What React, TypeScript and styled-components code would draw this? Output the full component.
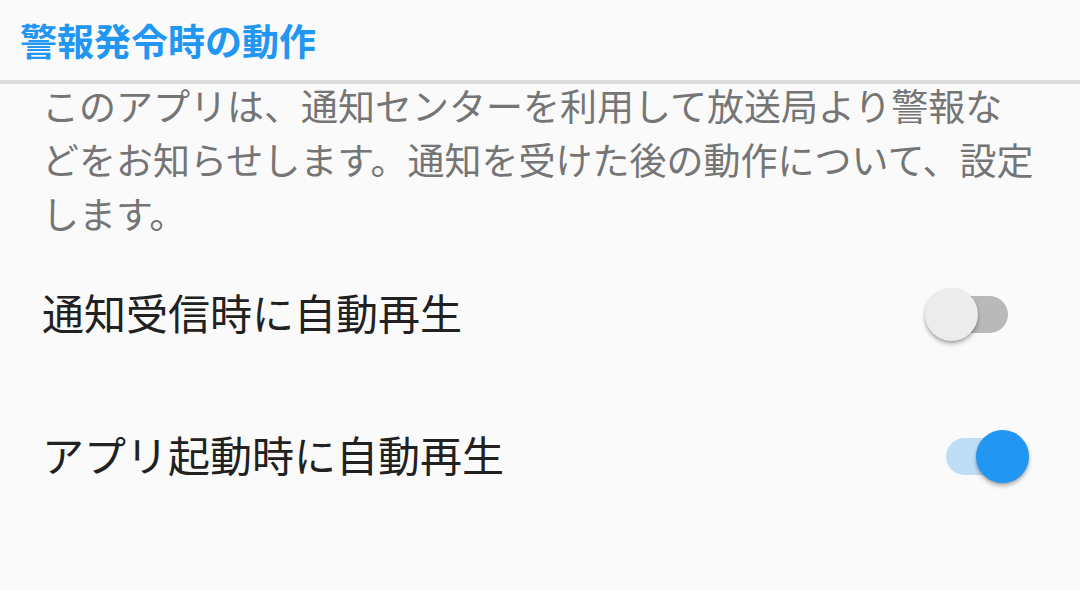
import React, { useState } from "react";
import styled, { createGlobalStyle } from "styled-components";

const GlobalStyle = createGlobalStyle`
  body {
    margin: 0;
    background: #fafafa;
    font-family: "Noto Sans CJK JP", "Noto Sans", sans-serif;
  }
`;

const Screen = styled.div`
  width: 1080px;
  height: 590px;
  background: #fafafa;
  display: flex;
  flex-direction: column;
  overflow: hidden;
`;

const Header = styled.div`
  height: 80px;
  display: flex;
  align-items: center;
  padding-left: 20px;
`;

const Title = styled.h1`
  margin: 0;
  font-size: 37px;
  font-weight: 700;
  color: #2196f3;
`;

const Divider = styled.div`
  height: 4px;
  background: #dcdcdc;
`;

const Description = styled.p`
  margin: -6px 0 0;
  padding: 0 42px;
  font-size: 37px;
  line-height: 54px;
  color: #757575;
`;

const Row = styled.div`
  height: 142px;
  display: flex;
  align-items: center;
  justify-content: space-between;
  padding: 0 51px 0 42px;
`;

const Label = styled.span`
  font-size: 42px;
  color: #212121;
`;

const SwitchBox = styled.div`
  position: relative;
  width: 104px;
  height: 53px;
  margin-top: 7px;
  cursor: pointer;
`;

const Track = styled.div<{ $on: boolean }>`
  position: absolute;
  left: 21px;
  top: 8px;
  width: 62px;
  height: 37px;
  border-radius: 19px;
  background: ${(p) => (p.$on ? "#bedef8" : "#b9b9b9")};
`;

const Thumb = styled.div<{ $on: boolean }>`
  position: absolute;
  top: 0;
  left: ${(p) => (p.$on ? "51px" : "0")};
  width: 53px;
  height: 53px;
  border-radius: 50%;
  background: ${(p) => (p.$on ? "#2196f3" : "#ececec")};
  box-shadow: 0 3px 4px rgba(0, 0, 0, 0.28), 0 1px 2px rgba(0, 0, 0, 0.12);
  transition: left 150ms;
`;

const Switch = ({ on, onToggle }: { on: boolean; onToggle: () => void }) => (
  <SwitchBox onClick={onToggle}>
    <Track $on={on} />
    <Thumb $on={on} />
  </SwitchBox>
);

const App = () => {
  const [onNotify, setOnNotify] = useState<boolean>(false);
  const [onLaunch, setOnLaunch] = useState<boolean>(true);

  return (
    <Screen>
      <GlobalStyle />
      <Header>
        <Title>警報発令時の動作</Title>
      </Header>
      <Divider />
      <Description>
        このアプリは、通知センターを利用して放送局より警報な
        <br />
        どをお知らせします。通知を受けた後の動作について、設定
        <br />
        します。
      </Description>
      <Row>
        <Label>通知受信時に自動再生</Label>
        <Switch on={onNotify} onToggle={() => setOnNotify((v) => !v)} />
      </Row>
      <Row>
        <Label>アプリ起動時に自動再生</Label>
        <Switch on={onLaunch} onToggle={() => setOnLaunch((v) => !v)} />
      </Row>
    </Screen>
  );
};

export default App;
